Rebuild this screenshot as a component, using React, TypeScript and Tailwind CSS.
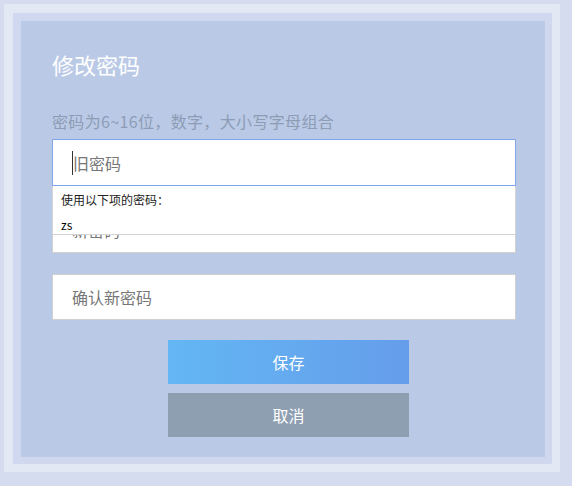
import React from "react";

const font = { fontFamily: '"Noto Sans CJK SC", "Noto Sans", sans-serif' };

export default function App() {
  return (
    <div className="w-[572px] h-[486px] bg-[#d5dcf0] pt-[4px] pl-[4px]" style={font}>
      <div className="w-[556px] h-[468px] bg-[#e3e9f4] pt-[9px] pl-[9px] pr-[8px] pb-[8px]">
        <div className="w-full h-full bg-[#cfd8ef] pt-[8px] pl-[8px] pr-[7px] pb-[7px]">
          <div className="w-[524px] h-[436px] bg-[#bacae6] pl-[31px] pt-[28px]">
            <h1 className="text-[22px] leading-[30px] text-white">修改密码</h1>
            <p className="mt-[30px] text-[16px] leading-[24px] text-[#8d9cb5] tracking-[0.35px]">
              密码为6~16位，数字，大小写字母组合
            </p>
            <div className="relative mt-[6px] w-[464px] flex flex-col gap-[21px]">
              <div className="relative h-[47px] bg-white border border-[#7ea6e8] flex items-center pl-[19px]">
                <span className="w-px h-[24px] bg-[#333]" />
                <span className="text-[16px] text-[#777]">旧密码</span>
              </div>
              <div className="h-[46px] bg-white border border-[#d0d0d0] flex items-center pl-[19px]">
                <span className="text-[16px] text-[#777]">新密码</span>
              </div>
              <div className="h-[46px] bg-white border border-[#d0d0d0] flex items-center pl-[19px]">
                <span className="text-[16px] text-[#777]">确认新密码</span>
              </div>
              <div className="absolute left-0 top-[47px] w-[464px] h-[49px] bg-white border-l border-r border-b border-[#d4d4d4] pl-[8px]">
                <div className="text-[12px] leading-[16px] text-[#222] mt-[6px]">使用以下项的密码：</div>
                <div className="text-[12px] leading-[16px] text-black mt-[9px]">zs</div>
              </div>
            </div>
            <div className="ml-[116px] mt-[20px] w-[241px] flex flex-col gap-[9px]">
              <button className="h-[44px] bg-gradient-to-r from-[#63b7f3] to-[#659deb] text-white text-[16px]">
                保存
              </button>
              <button className="h-[44px] bg-[#8f9fb2] text-white text-[16px]">取消</button>
            </div>
          </div>
        </div>
      </div>
    </div>
  );
}
